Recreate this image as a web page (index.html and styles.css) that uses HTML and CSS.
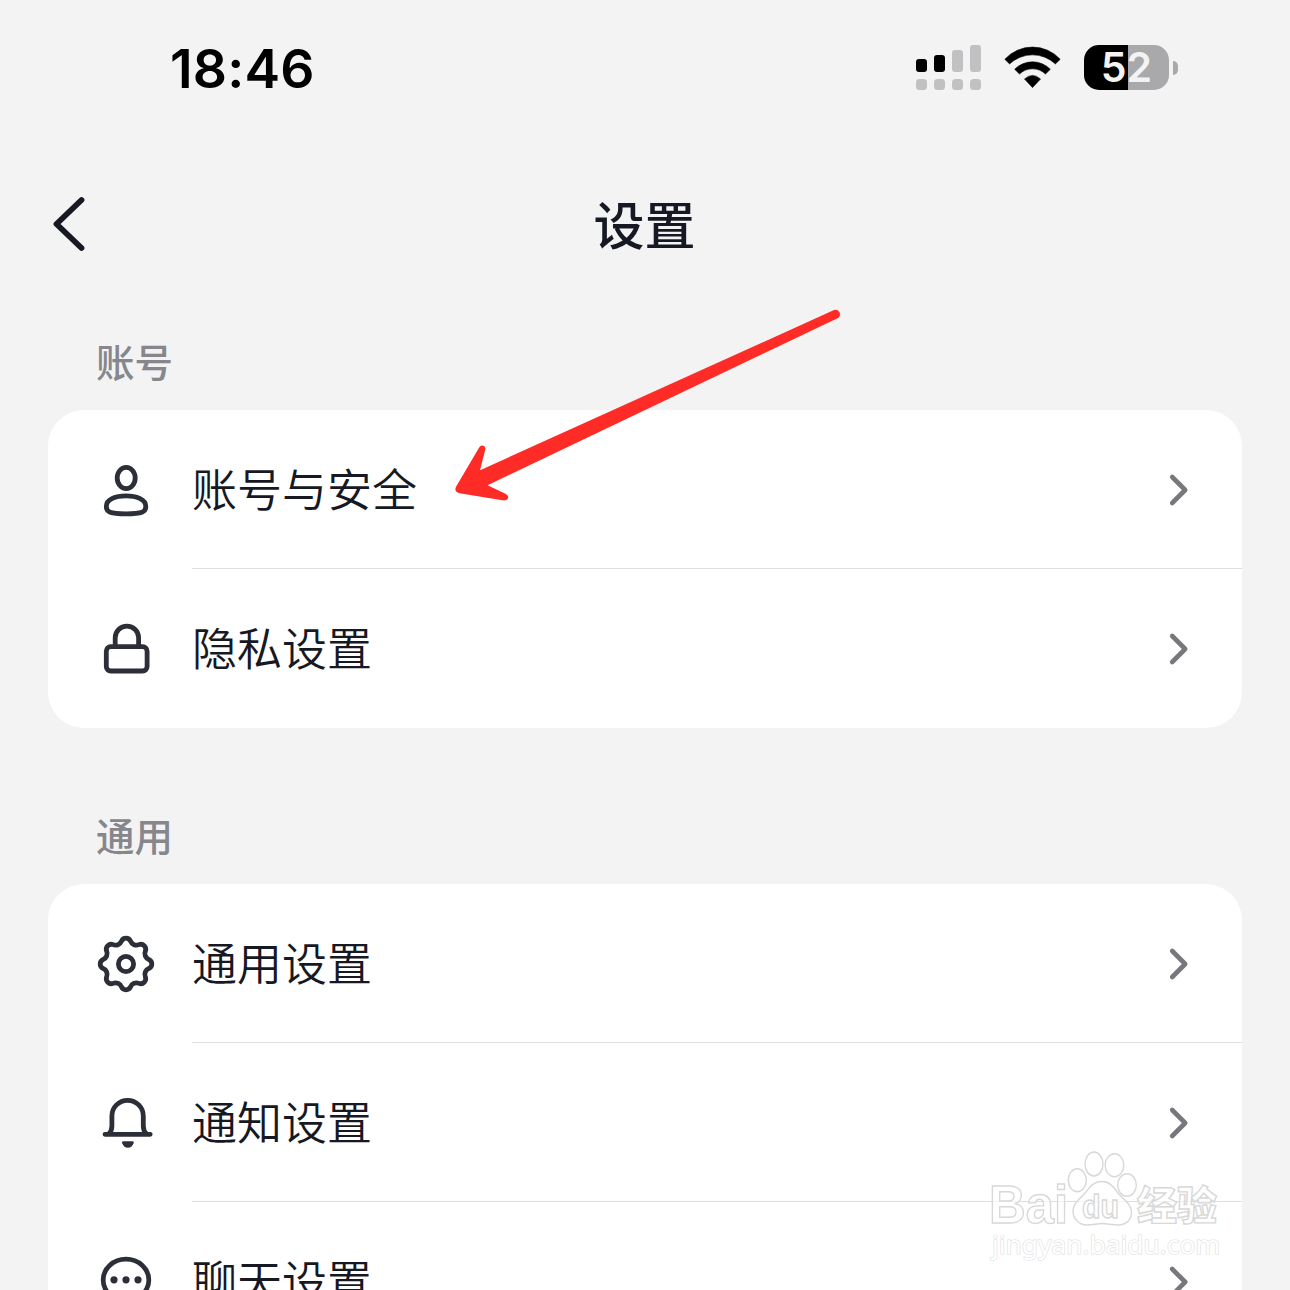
FILE: index.html
```html
<!DOCTYPE html>
<html lang="zh-CN">
<head>
<meta charset="utf-8">
<title>设置</title>
<link rel="stylesheet" href="styles.css">
</head>
<body>
<div class="screen">
  <header class="status">
    <span class="time">18:46</span>
    <div class="indicators">
      <svg class="signal" width="66" height="46" viewBox="0 0 66 46">
        <rect class="on" x="0" y="14" width="11" height="13" rx="3"/>
        <rect class="on" x="18" y="10" width="11" height="17" rx="3"/>
        <rect x="36" y="5" width="11" height="22" rx="3"/>
        <rect x="54" y="0" width="11" height="27" rx="3"/>
        <rect x="0" y="34" width="11" height="11" rx="3.5"/>
        <rect x="18" y="34" width="11" height="11" rx="3.5"/>
        <rect x="36" y="34" width="11" height="11" rx="3.5"/>
        <rect x="54" y="34" width="11" height="11" rx="3.5"/>
      </svg>
      <svg class="wifi" width="58" height="46" viewBox="0 0 58 46">
        <path d="M.8 14.3A37.500 37.500 0 0 1 56.200 14.3L51.400 18.900A33.500 33.500 0 0 0 5.600 18.900Z"/>
        <path d="M10.700 24.3A25 25 0 0 1 46.300 24.3L41.500 29A19 19 0 0 0 15.500 29Z"/>
        <path d="M20.500 34Q28.500 26.800 36.500 34L28.500 42.600Z"/>
      </svg>
      <div class="battery"><span class="level">52</span><i class="nub"></i></div>
    </div>
  </header>

  <nav class="titlebar">
    <svg class="back" width="36" height="60" viewBox="0 0 36 60"><path d="M31.5 6L6.500 30L31.5 54"/></svg>
    <h1 class="title">设置</h1>
  </nav>

  <section class="group">
    <h2 class="label">账号</h2>
    <ul class="card">
      <li class="row">
        <svg class="icon" width="60" height="59" viewBox="0 0 60 59">
          <ellipse cx="30.2" cy="18" rx="9" ry="10.6"/>
          <path d="M30 35.9C40 35.9 49.8 39 49.8 46.5C49.8 52 46 53.8 30 53.8C14 53.8 10.3 52 10.3 46.5C10.3 39 20 35.9 30 35.9Z"/>
        </svg>
        <div class="cell"><span class="name">账号与安全</span><svg class="chev" width="22" height="36" viewBox="0 0 22 36"><path d="M4.2 5L17.2 18L4.2 31"/></svg></div>
      </li>
      <li class="row">
        <svg class="icon" width="60" height="59" viewBox="0 0 60 59">
          <rect x="10.3" y="27.7" width="40.8" height="24.3" rx="4.5"/>
          <path d="M19.2 27V18.8a11.7 11.7 0 0 1 23.4 0V27"/>
        </svg>
        <div class="cell"><span class="name">隐私设置</span><svg class="chev" width="22" height="36" viewBox="0 0 22 36"><path d="M4.2 5L17.2 18L4.2 31"/></svg></div>
      </li>
    </ul>
  </section>

  <section class="group">
    <h2 class="label">通用</h2>
    <ul class="card">
      <li class="row">
        <svg class="icon" width="60" height="59" viewBox="0 0 60 59">
          <path transform="translate(30 30)" d="M22.85 -4.55A4.98 4.98 0 0 1 22.85 4.55A6.3 6.3 0 0 0 19.37 12.94A4.98 4.98 0 0 1 12.94 19.37A6.3 6.3 0 0 0 4.55 22.85A4.98 4.98 0 0 1 -4.55 22.85A6.3 6.3 0 0 0 -12.94 19.37A4.98 4.98 0 0 1 -19.37 12.94A6.3 6.3 0 0 0 -22.85 4.55A4.98 4.98 0 0 1 -22.85 -4.55A6.3 6.3 0 0 0 -19.37 -12.94A4.98 4.98 0 0 1 -12.94 -19.37A6.3 6.3 0 0 0 -4.55 -22.85A4.98 4.98 0 0 1 4.55 -22.85A6.3 6.3 0 0 0 12.94 -19.37A4.98 4.98 0 0 1 19.37 -12.94A6.3 6.3 0 0 0 22.85 -4.55Z"/>
          <circle cx="30" cy="30" r="7.6"/>
        </svg>
        <div class="cell"><span class="name">通用设置</span><svg class="chev" width="22" height="36" viewBox="0 0 22 36"><path d="M4.2 5L17.2 18L4.2 31"/></svg></div>
      </li>
      <li class="row">
        <svg class="icon" width="60" height="59" viewBox="0 0 60 59">
          <path d="M9 41.3H54.2M12.5 41C15 39 15.9 37 15.9 33V23a15.7 15.7 0 0 1 31.4 0V33c0 4 1 6 3.4 8"/>
          <path class="solid" d="M27.5 48.2H36.3Q38.4 48.2 37.6 50.2Q35.8 54.8 31.9 54.8Q28 54.8 26.2 50.2Q25.4 48.2 27.5 48.2Z"/>
        </svg>
        <div class="cell"><span class="name">通知设置</span><svg class="chev" width="22" height="36" viewBox="0 0 22 36"><path d="M4.2 5L17.2 18L4.2 31"/></svg></div>
      </li>
      <li class="row">
        <svg class="icon" width="60" height="59" viewBox="0 0 60 59">
          <ellipse cx="30" cy="28" rx="22.8" ry="20.8"/>
          <g class="solid"><circle cx="18" cy="27.8" r="3.6"/><circle cx="30" cy="27.8" r="3.6"/><circle cx="42" cy="27.8" r="3.6"/></g>
        </svg>
        <div class="cell"><span class="name">聊天设置</span><svg class="chev" width="22" height="36" viewBox="0 0 22 36"><path d="M4.2 5L17.2 18L4.2 31"/></svg></div>
      </li>
    </ul>
  </section>

  <svg class="pointer" width="400" height="200" viewBox="448 306 400 200">
    <path d="M833.5 310.3L480 470.2L485.4 449.3Q485.3 445.6 482.2 445.6Q480.2 445.7 479 447.8L456.2 486.5Q453.5 491.5 459.5 493.3L504 500.6Q508.5 500 508.2 496.8Q508 495 505 493.5L487.5 485.3L837.5 318.3A4.4 4.4 0 0 0 833.5 310.3Z"/>
  </svg>

  <svg class="watermark" width="250" height="124" viewBox="980 1146 250 124">
    <text class="brand" x="989" y="1223" textLength="79" lengthAdjust="spacingAndGlyphs">Bai</text>
    <ellipse cx="1077.3" cy="1180.3" rx="9" ry="11.5"/>
    <ellipse cx="1094" cy="1164" rx="9" ry="12"/>
    <ellipse cx="1114.5" cy="1165.3" rx="9.3" ry="11.5"/>
    <ellipse cx="1127" cy="1185" rx="9.3" ry="11.3"/>
    <path d="M1101.5 1181.5C1110 1181.5 1113.500 1187 1118 1193C1123 1199 1131.500 1204 1131.500 1212C1131.500 1221 1125 1225 1118 1225C1112 1225 1107 1223.500 1102 1223.500C1097 1223.500 1093 1225 1087 1225C1079 1225 1073 1219 1073 1211C1073 1203 1080 1199 1085 1193C1090 1187 1093.500 1181.500 1101.500 1181.500Z"/>
    <text class="du" x="1082" y="1217.500" textLength="37" lengthAdjust="spacingAndGlyphs">du</text>
    <text class="cn" x="1137" y="1220" textLength="80" lengthAdjust="spacingAndGlyphs">经验</text>
    <text class="url" x="992" y="1254" textLength="228" lengthAdjust="spacingAndGlyphs">jingyan.baidu.com</text>
  </svg>
</div>
</body>
</html>
```
FILE: styles.css
```css
* { box-sizing: border-box; }
body { margin: 0; }
.screen {
  position: relative;
  width: 1290px;
  height: 1290px;
  overflow: hidden;
  background: #f3f3f3;
  color: #161823;
  font-family: "Noto Sans CJK SC", sans-serif;
}
.status {
  display: flex;
  justify-content: space-between;
  align-items: center;
  height: 136px;
  padding: 0 112px 0 170px;
  font-family: Inter, sans-serif;
  color: #000;
}
.time { font-size: 53.5px; font-weight: 600; line-height: 60px; padding-top: 2px; letter-spacing: .2px; }
.indicators { display: flex; align-items: center; }
.signal { fill: #c1c1c3; }
.signal .on { fill: #000; }
.wifi { margin: 0 22px; stroke: #000; stroke-width: .6; stroke-linejoin: round; }
.battery {
  position: relative;
  width: 85px;
  height: 45px;
  margin: 0 9px 1px 0;
  border-radius: 15px;
  background: linear-gradient(90deg, #000 44px, #a9a9ab 44px);
  text-align: center;
}
.level { display: block; font-size: 41px; font-weight: 600; line-height: 45px; color: #f3f3f3; }
.nub {
  position: absolute;
  right: -9px;
  top: 16px;
  width: 5px;
  height: 14px;
  border-radius: 0 6px 6px 0;
  background: #a9a9ab;
}
.titlebar {
  display: grid;
  grid-template-columns: 100px 1fr 100px;
  align-items: center;
  height: 176px;
  padding: 0 1px 0 0;
}
.back {
  margin-left: 50px;
  fill: none;
  stroke: #161823;
  stroke-width: 5.8;
  stroke-linecap: round;
  stroke-linejoin: round;
}
.title {
  grid-column: 2;
  margin: 0;
  padding-bottom: 2px;
  font-size: 51px;
  font-weight: 500;
  line-height: 60px;
  text-align: center;
}
.group { padding: 0 48px; }
.label {
  height: 98px;
  margin: 0;
  padding: 23px 48px 0;
  color: #86868c;
  font-size: 38.5px;
  font-weight: 500;
  line-height: 50px;
}
.group + .group { padding-top: 58px; }
.card { margin: 0; padding: 0; list-style: none; background: #fff; border-radius: 36px; overflow: hidden; }
.row { display: flex; align-items: center; height: 159px; padding-left: 48px; }
.icon { flex: none; fill: none; stroke: #2c2e38; stroke-width: 4.8; stroke-linecap: round; stroke-linejoin: round; }
.icon .solid { fill: #2c2e38; stroke: none; }
.cell {
  flex: 1;
  display: flex;
  justify-content: space-between;
  align-items: center;
  height: 159px;
  margin-left: 36px;
  padding-right: 52px;
  border-bottom: 1px solid #dfdfe0;
  font-size: 45px;
  font-weight: 350;
}
.name { padding-bottom: 3px; line-height: 60px; }
.row:last-child .cell { border-bottom-color: transparent; }
.chev { margin-top: 2px; fill: none; stroke: #77777d; stroke-width: 4.6; stroke-linecap: round; stroke-linejoin: round; }
.pointer { position: absolute; left: 448px; top: 306px; fill: #ff2b26; }
.watermark {
  position: absolute;
  left: 980px;
  top: 1146px;
  fill: rgba(255, 255, 255, .65);
  stroke: #d8d8d8;
  stroke-width: 1.4;
}
.brand { font: 700 54px "Liberation Sans", sans-serif; }
.du { font: 700 33px "Liberation Sans", sans-serif; }
.cn { font: 900 40px "Noto Sans CJK SC", sans-serif; }
.url { font: 400 26px "Noto Sans", sans-serif; stroke: #dedede; stroke-width: 1.2; paint-order: stroke; fill: #fff; }
```
